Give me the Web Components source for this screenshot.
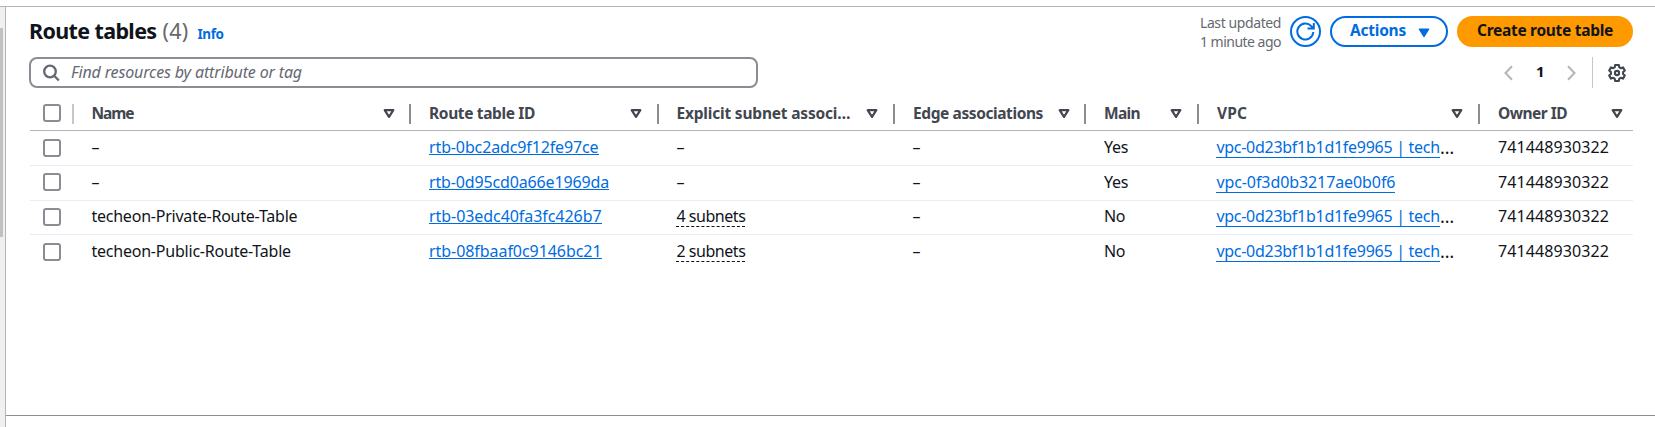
<!DOCTYPE html>
<html lang="en"><head><meta charset="utf-8"><title>Route tables</title>
<style>
html,body{margin:0;height:100%;overflow:hidden;background:#fff}
body{font-family:"Noto Sans","Open Sans",sans-serif;font-size:16px;color:#0f141a}
</style></head><body>
<route-page></route-page>
<script>
const define=(name,html,ready)=>customElements.define(name,class extends HTMLElement{
  constructor(){super();const t=document.createElement('template');t.innerHTML=html;
    this.attachShadow({mode:'open'}).append(t.content.cloneNode(true));}
  connectedCallback(){if(ready)ready.call(this,this.shadowRoot);}
});

// Text label set to a given advance width by adjusting its tracking.
define('fit-text',`<style>:host{display:block;white-space:pre;line-height:20px;flex:none}span{display:inline-block}</style><span><slot></slot></span>`,function(r){
  const w=+this.getAttribute('w');if(!w)return;
  const s=r.querySelector('span'),n=this.textContent.length;
  const d=(w-s.getBoundingClientRect().width)/n;
  s.style.letterSpacing=d+'px';this.style.width=w+'px';
});

define('check-box',`<style>:host{display:block;box-sizing:border-box;width:18px;height:18px;border:2px solid #8c8c94;border-radius:3px;background:#fff}</style>`);

define('sort-icon',`<style>:host{display:block;width:12px;height:10px;flex:none}svg{display:block}</style>
<svg width="12" height="10" viewBox="0 0 12 10"><path d="M1.7 1.2h8.6L6 7.9z" fill="none" stroke="#424650" stroke-width="2.2" stroke-linejoin="round"/></svg>`);

define('column-head',`<style>:host{display:flex;box-sizing:border-box;height:20px;padding-left:18px;border-right:2px solid #8c8c94;align-items:center;justify-content:space-between;color:#424650;font-weight:700;padding-right:14px;font-size:15.5px}
:host([wide]){padding-right:15px}
:host([half]){padding-left:17.4px}
:host([last]){border-right:0;padding-right:10px}
::slotted(fit-text){margin-top:-2px}</style><slot></slot><sort-icon></sort-icon>`);

define('id-link',`<style>:host{display:block;width:max-content;color:#006ce0;border-bottom:1px solid #006ce0;height:var(--link-height,18px);box-sizing:border-box}</style><slot></slot>`);

define('table-row',`<style>:host{display:grid;grid-template-columns:44px 337px 248px 236px 191px 113px 281px 1fr;box-sizing:border-box;height:35px;border-bottom:1px solid #ebebf0}
:host([short]){height:34px}:host([end]){border-bottom-color:transparent}
::slotted(*){margin-top:var(--text-top,6px)}
check-box{margin:var(--box-top,8px) 0 0 13px}</style><check-box></check-box><slot></slot>`);

define('route-page',`<style>
:host{display:grid;grid-template-columns:5px 1fr;grid-template-rows:6px 421px;height:427px;box-sizing:border-box}
.top{grid-column:1/3}
.track{background:#f0f0f0;border-top:1px solid #b4b4bb;padding-top:21px}
.thumb{width:3px;height:209px;background:#c1c1c1}
main{border-top:1px solid #b4b4bb;border-left:1px solid #b4b4bb;display:flex;flex-direction:column}
.panel{box-sizing:border-box;border-bottom:1px solid #8c8c94;height:409px;padding:9px 22px 0 23px}
header{display:flex;height:31px}
h2{margin:0;font-size:21.5px;font-weight:700;display:flex;width:1171px;align-items:flex-start}
h2 fit-text{line-height:30px}
.count{color:#656871;font-weight:400;margin-left:6px}
.info{color:#006ce0;font-size:13.5px;margin-left:9px}
h2 .info{line-height:36px}
.updated{color:#656871;font-size:14px;width:81px;margin-right:9px;margin-top:-2px}
.updated fit-text{line-height:18px}
.updated fit-text+fit-text{margin-top:1px}
.refresh{width:31px;height:31px;margin-right:9px}
button{all:unset;box-sizing:border-box;display:flex;height:31px;border-radius:16px;align-items:center;font-weight:700;font-size:15.5px;flex:none}
button fit-text{margin-top:-3px}
.actions{width:118px;border:2px solid #006ce0;color:#006ce0;padding-left:18px;margin-right:9px}
.actions svg{margin-left:12px;margin-top:2px}
.create{width:176px;background:#f90;color:#0f141a;padding-left:20px}
.tools{display:flex;height:31px;margin-top:10px;align-items:center}
.search{width:729px;height:31px;box-sizing:border-box;border:2px solid #8c8c94;border-radius:8px;display:flex;align-items:center;padding-left:11px;color:#656871;font-style:italic}
.search svg{margin-right:11px}.search fit-text{margin-top:-1px}
.pager{margin-left:auto;display:flex;align-items:center;height:31px}
.one{font-size:15px;font-weight:700;margin:-3px 22px 0 23px}
.rule{width:1px;height:31px;background:#c6c6cd;margin:0 15px 0 16px}
.head{display:grid;grid-template-columns:44px 337px 248px 236px 191px 113px 281px 1fr;height:43px;box-sizing:border-box;border-bottom:1px solid #b4b4bb;margin-left:1px;padding-top:16px}
.pick{height:20px;border-right:2px solid #c6c6cd;padding-left:13px;box-sizing:border-box}
.rows{margin-left:1px}
.cell{padding-left:18px}
.half{padding-left:17.4px}
.vpc{display:flex;--link-height:21px}
.more{font-size:18px}
.sub{height:21px;box-sizing:border-box;width:max-content;border-bottom:1px dashed #0f141a}
</style>
<div class="top"></div>
<div class="track"><div class="thumb"></div></div>
<main><section class="panel">
<header><h2><fit-text w="127.5">Route tables</fit-text><fit-text class="count" w="26">(4)</fit-text><fit-text class="info" w="26">Info</fit-text></h2>
<div class="updated"><fit-text w="81">Last updated</fit-text><fit-text w="81">1 minute ago</fit-text></div>
<svg class="refresh" viewBox="0 0 31 31" fill="none" stroke="#006ce0" stroke-width="2"><circle cx="15.5" cy="15.5" r="14.5"/><path d="M23.3 16a8 8 0 1 1-2-5.8l1.9 2M23.8 7v5.6h-6.3" /></svg>
<button class="actions"><fit-text w="56">Actions</fit-text><svg width="12" height="10" viewBox="0 0 12 10"><path d="M1 1h10L6 9z" fill="#006ce0" stroke="#006ce0" stroke-linejoin="round"/></svg></button>
<button class="create"><fit-text w="136">Create route table</fit-text></button></header>
<div class="tools"><div class="search"><svg width="18" height="18" viewBox="0 0 18 18" fill="none" stroke="#656871" stroke-width="2.3"><circle cx="8" cy="7.5" r="5.8"/><path d="M12.2 11.8l4.6 4.7"/></svg><fit-text w="231">Find resources by attribute or tag</fit-text></div>
<div class="pager"><svg width="9" height="16" viewBox="0 0 9 16" fill="none" stroke="#b4b4bb" stroke-width="2"><path d="M8 1.3L1.5 8 8 14.7"/></svg><fit-text class="one" w="9">1</fit-text><svg width="9" height="16" viewBox="0 0 9 16" fill="none" stroke="#b4b4bb" stroke-width="2"><path d="M1 1.3L7.5 8 1 14.7"/></svg><div class="rule"></div>
<svg width="25" height="18" viewBox="0 0 25 18" fill="none" stroke="#424650" stroke-width="2.1" stroke-linejoin="round"><path d="M7.2 1h3.6l.5 2.3 1.5.9 2.2-.8 1.8 3.1-1.7 1.6v1.8l1.7 1.6-1.8 3.1-2.2-.8-1.5.9-.5 2.3H7.2l-.5-2.3-1.5-.9-2.2.8-1.8-3.1 1.7-1.6V8.1L1.2 6.5 3 3.4l2.2.8 1.5-.9z"/><circle cx="9" cy="9" r="2.1"/></svg></div></div>
<div class="head"><div class="pick"><check-box></check-box></div>
<column-head half><fit-text w="42">Name</fit-text></column-head>
<column-head wide><fit-text w="106">Route table ID</fit-text></column-head>
<column-head wide half><fit-text w="174">Explicit subnet associ…</fit-text></column-head>
<column-head><fit-text w="130">Edge associations</fit-text></column-head>
<column-head wide><fit-text w="36">Main</fit-text></column-head>
<column-head wide><fit-text w="30">VPC</fit-text></column-head>
<column-head last><fit-text w="69">Owner ID</fit-text></column-head></div>
<div class="rows"></div>
</section></main>`,function(r){
  const rows=[['–',0,'rtb-0bc2adc9f12fe97ce',169.5,'–','Yes',1],['–',0,'rtb-0d95cd0a66e1969da',180,'–','Yes',0],
   ['techeon-Private-Route-Table',206,'rtb-03edc40fa3fc426b7',172.5,'4 subnets','No',1],
   ['techeon-Public-Route-Table',199.5,'rtb-08fbaaf0c9146bc21',172.5,'2 subnets','No',1]];
  const tops=[[6,8],[6,7],[5,7],[6,8]];
  r.querySelector('.rows').innerHTML=rows.map((d,i)=>`<table-row style="--text-top:${tops[i][0]}px;--box-top:${tops[i][1]}px" ${i==2?'short':''} ${i==3?'end':''}>
<div class="cell half"><fit-text w="${d[1]||8}">${d[0]}</fit-text></div>
<div class="cell"><id-link><fit-text w="${d[3]}">${d[2]}</fit-text></id-link></div>
<div class="cell half">${d[4]=='–'?'<fit-text w="8">–</fit-text>':`<div class="sub"><fit-text w="69">${d[4]}</fit-text></div>`}</div>
<div class="cell half"><fit-text w="8">–</fit-text></div>
<div class="cell"><fit-text w="${d[5]=='Yes'?24:21}">${d[5]}</fit-text></div>
<div class="cell half vpc">${d[6]?'<id-link><fit-text w="223.5">vpc-0d23bf1b1d1fe9965 | tech</fit-text></id-link><fit-text class="more" w="18">…</fit-text>':'<id-link><fit-text w="179">vpc-0f3d0b3217ae0b0f6</fit-text></id-link>'}</div>
<div class="cell"><fit-text w="111">741448930322</fit-text></div></table-row>`).join('');
});
</script></body></html>
